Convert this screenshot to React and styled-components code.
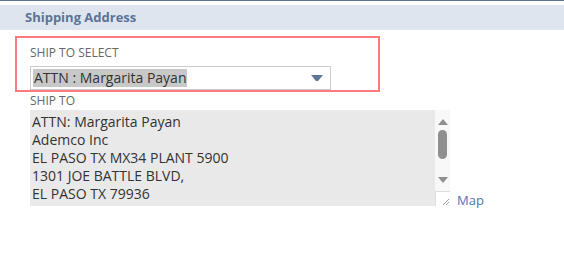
import React from 'react';
import styled, { createGlobalStyle } from 'styled-components';

const GlobalStyle = createGlobalStyle`
  body {
    margin: 0;
    background: #ffffff;
    font-family: "Open Sans", "Liberation Sans", sans-serif;
  }
`;

const Page = styled.div`
  width: 564px;
  height: 261px;
  overflow: hidden;
  border-top: 1px solid #5f7594;
`;

const SectionHeader = styled.div`
  margin-top: 4px;
  height: 25px;
  background: #dfe5ef;
  padding-left: 25px;
  font-size: 13px;
  font-weight: 700;
  line-height: 25px;
  color: #5b7396;
`;

const Body = styled.div`
  padding-left: 15px;
`;

const HighlightBox = styled.div`
  margin-top: 6px;
  width: 348px;
  height: 52px;
  border: 2px solid #ff7a80;
  padding-left: 13px;
  box-sizing: content-box;
`;

const FieldLabel = styled.div`
  font-size: 12px;
  line-height: 16px;
  color: #666666;
  text-transform: uppercase;
  padding-top: ${(p) => p.$top || 0}px;
`;

const SelectBox = styled.div`
  margin-top: 5px;
  height: 22px;
  border: 1px solid #cccccc;
  display: flex;
  align-items: center;
  justify-content: space-between;
  padding: 0 7px 0 2px;
  box-sizing: content-box;
  width: 290px;
`;

const SelectedText = styled.span`
  background: #c8c8c8;
  color: #333333;
  font-size: 14px;
  line-height: 18px;
  padding: 0 1px;
`;

const ShipTo = styled.div`
  padding-left: 15px;
`;

const AddressRow = styled.div`
  display: flex;
  align-items: flex-end;
  margin-top: 1px;
`;

const AddressBox = styled.div`
  display: flex;
  width: 420px;
  height: 96px;
`;

const AddressText = styled.div`
  width: 405px;
  background: #e9e9e9;
  padding: 3px 0 0 2px;
  box-sizing: border-box;
  font-size: 14px;
  line-height: 18px;
  color: #333333;
`;

const Scrollbar = styled.div`
  width: 15px;
  display: flex;
  flex-direction: column;
  background: #f8f8f8;
`;

const ScrollTrack = styled.div`
  flex: 1;
  display: flex;
  flex-direction: column;
  align-items: center;
  padding-top: 9px;
`;

const ScrollThumb = styled.div`
  width: 9px;
  height: 29px;
  margin-top: 5px;
  border-radius: 5px;
  background: #8f8f8f;
`;

const Spacer = styled.div`
  flex: 1;
`;

const ArrowGap = styled.div`
  height: 8px;
`;

const ResizeCorner = styled.div`
  height: 15px;
  background: #ffffff;
  border-top: 1px solid #dddddd;
  border-left: 1px solid #dddddd;
  box-sizing: border-box;
  display: flex;
  align-items: flex-end;
  justify-content: flex-end;
`;

const MapLink = styled.a`
  margin-left: 7px;
  font-size: 13px;
  line-height: 16px;
  color: #4a78b0;
  text-decoration: none;
  position: relative;
  top: 2px;
`;

const Triangle = ({ up, color }) => (
  <svg width="10" height="6" viewBox="0 0 10 6">
    <path d={up ? 'M0 6 L5 0 L10 6 Z' : 'M0 0 L10 0 L5 6 Z'} fill={color} />
  </svg>
);

const lines = [
  'ATTN: Margarita Payan',
  'Ademco Inc',
  'EL PASO TX MX34 PLANT 5900',
  '1301 JOE BATTLE BLVD,',
  'EL PASO TX 79936',
];

const App = () => (
  <Page>
    <GlobalStyle />
    <SectionHeader>Shipping Address</SectionHeader>
    <Body>
      <HighlightBox>
        <FieldLabel $top={7}>Ship To Select</FieldLabel>
        <SelectBox>
          <SelectedText>ATTN : Margarita Payan</SelectedText>
          <svg width="12" height="7" viewBox="0 0 12 7">
            <path d="M0 0 H12 L7 6 H5 Z" fill="#5f7594" />
          </svg>
        </SelectBox>
      </HighlightBox>
      <ShipTo>
        <FieldLabel $top={1}>Ship To</FieldLabel>
        <AddressRow>
          <AddressBox>
            <AddressText>
              {lines.map((l) => (
                <div key={l}>{l}</div>
              ))}
            </AddressText>
            <Scrollbar>
              <ScrollTrack>
                <Triangle up color="#8f8f8f" />
                <ScrollThumb />
                <Spacer />
                <Triangle color="#8f8f8f" />
                <ArrowGap />
              </ScrollTrack>
              <ResizeCorner>
                <svg width="8" height="8" viewBox="0 0 8 8">
                  <path d="M1 7 L7 1 M4 7 L7 4" stroke="#888" strokeWidth="0.8" />
                </svg>
              </ResizeCorner>
            </Scrollbar>
          </AddressBox>
          <MapLink href="#">Map</MapLink>
        </AddressRow>
      </ShipTo>
    </Body>
  </Page>
);

export default App;
